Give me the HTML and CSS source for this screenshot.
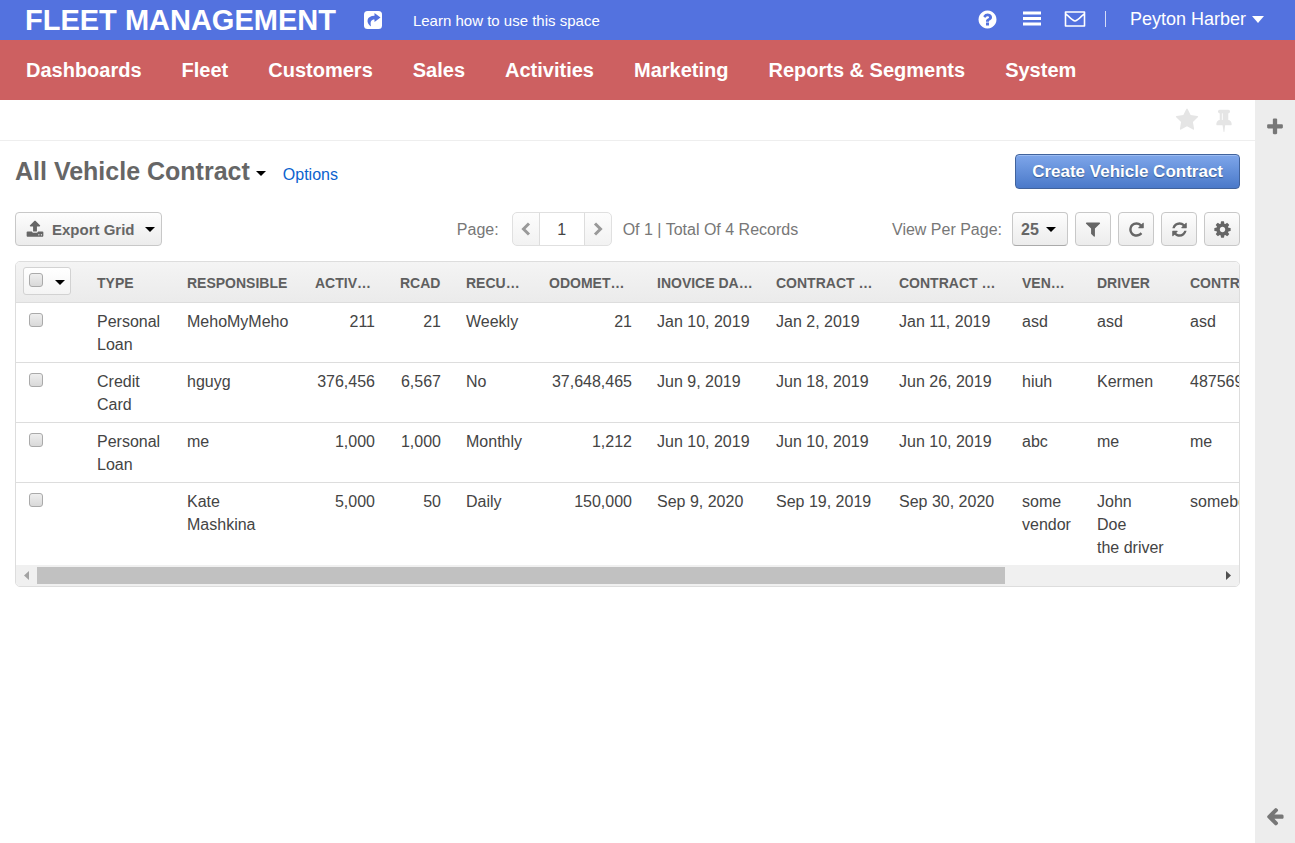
FILE: index.html
```html
<!DOCTYPE html>
<html lang="en">
<head>
<meta charset="utf-8">
<title>Fleet Management</title>
<link rel="stylesheet" href="styles.css">
</head>
<body>
<header class="topbar">
  <span class="brand">FLEET MANAGEMENT</span>
  <a class="share" href="#" aria-label="Share space"><svg width="20" height="20" viewBox="0 0 20 20"><rect x="1" y="1" width="18" height="18" rx="3.500" fill="#fff"/><path d="M11.500 3 17.500 7.500l-6 4.500V9.500C8 9.500 7 11.500 8 16.500 2.500 12.500 3.500 5.700 11.500 5.700z" fill="#5372df"/></svg></a>
  <a class="learn" href="#">Learn how to use this space</a>
  <div class="tools">
    <a class="tool help" href="#" aria-label="Help"><svg width="21" height="21" viewBox="0 0 1792 1792"><path d="M1024 1376v-192q0-14-9-23t-23-9h-192q-14 0-23 9t-9 23v192q0 14 9 23t23 9h192q14 0 23-9t9-23zm256-672q0-88-55.500-163t-138.500-116-170-41q-243 0-371 213-15 24 8 42l132 100q7 6 19 6 16 0 25-12 53-68 86-92 34-24 86-24 48 0 85.500 26t37.500 59q0 38-20 61t-68 45q-63 28-115.500 86.500t-52.500 125.500v36q0 14 9 23t23 9h192q14 0 23-9t9-23q0-19 21.500-49.500t54.500-49.500q32-18 49-28.500t46-35 44.500-48 28-60.500 12.500-81zm384 192q0 209-103 385.500t-279.500 279.500-385.500 103-385.500-103-279.500-279.500-103-385.500 103-385.500 279.500-279.500 385.500-103 385.500 103 279.500 279.500 103 385.500z"/></svg></a>
    <button class="tool menu" aria-label="Menu"><svg width="20" height="20" viewBox="0 0 20 20"><path d="M1 2.500h18v3H1zM1 8h18v3H1zM1 13.500h18v3H1z"/></svg></button>
    <a class="tool mail" href="#" aria-label="Mail"><svg width="22" height="20" viewBox="0 0 22 20"><path d="M1.500 3h19v14h-19zM1.500 4.500c3.500 3 7 7.500 9.500 7.500s6-4.500 9.500-7.500" fill="none" stroke="#fff" stroke-width="1.600" stroke-linejoin="round"/></svg></a>
    <span class="divider"></span>
    <button class="user">Peyton Harber <svg width="12" height="7" viewBox="0 0 12 7"><path d="M0 0h12L6 7z"/></svg></button>
  </div>
</header>
<nav class="nav">
  <a href="#">Dashboards</a><a href="#">Fleet</a><a href="#">Customers</a><a href="#">Sales</a><a href="#">Activities</a><a href="#">Marketing</a><a href="#">Reports &amp; Segments</a><a href="#">System</a>
</nav>
<div class="layout">
  <main class="main">
    <div class="marks">
      <button class="mark" aria-label="Favorite"><svg width="24" height="24" viewBox="0 0 1792 1792"><path d="M1728 647q0 22-26 48l-363 354 86 500q1 7 1 20 0 21-10.500 35.500t-30.500 14.500q-19 0-40-12l-449-236-449 236q-22 12-40 12-21 0-31.500-14.500t-10.500-35.500q0-6 2-20l86-500-364-354q-25-27-25-48 0-37 56-46l502-73 225-455q19-41 49-41t49 41l225 455 502 73q56 9 56 46z"/></svg></button>
      <button class="mark" aria-label="Pin"><svg width="24" height="24" viewBox="0 0 1792 1792"><path d="M800 864v-448q0-14-9-23t-23-9-23 9-9 23v448q0 14 9 23t23 9 23-9 9-23zm672 352q0 26-19 45t-45 19h-429l-51 483q-2 12-10.500 20.500t-20.500 8.500h-1q-27 0-32-27l-76-485h-404q-26 0-45-19t-19-45q0-123 78.500-221.500t177.500-98.500v-512q-52 0-90-38t-38-90 38-90 90-38h640q52 0 90 38t38 90-38 90-90 38v512q99 0 177.500 98.500t78.500 221.500z"/></svg></button>
    </div>
    <div class="content">
      <div class="heading">
        <h1>All Vehicle Contract</h1>
        <button class="views" aria-label="Choose view"><span class="caret"></span></button>
        <a class="options" href="#">Options</a>
        <button class="create">Create Vehicle Contract</button>
      </div>
      <div class="toolbar">
        <div><button class="btn export"><svg width="18" height="18" viewBox="0 0 1792 1792"><path d="M1344 1472q0-26-19-45t-45-19-45 19-19 45 19 45 45 19 45-19 19-45zm256 0q0-26-19-45t-45-19-45 19-19 45 19 45 45 19 45-19 19-45zm128-224v320q0 40-28 68t-68 28h-1472q-40 0-68-28t-28-68v-320q0-40 28-68t68-28h427q21 56 70.500 92t110.500 36h256q61 0 110.500-36t70.500-92h427q40 0 68 28t28 68zm-325-648q-17 40-59 40h-256v448q0 26-19 45t-45 19h-256q-26 0-45-19t-19-45v-448h-256q-42 0-59-40-17-39 14-69l448-448q18-19 45-19t45 19l448 448q31 30 14 69z"/></svg><span>Export Grid</span><span class="caret"></span></button></div>
        <div class="paging">
          <label for="page">Page:</label>
          <div class="pager">
            <button aria-label="Previous page"><svg width="12" height="14" viewBox="0 0 12 14"><path d="M9 1.500 3.500 7 9 12.500"/></svg></button>
            <input id="page" type="text" value="1">
            <button aria-label="Next page"><svg width="12" height="14" viewBox="0 0 12 14"><path d="M3 1.500 8.500 7 3 12.500"/></svg></button>
          </div>
          <span>Of 1 | Total Of 4 Records</span>
        </div>
        <div class="actions">
          <label for="size">View Per Page:</label>
          <div class="sizebox"><select id="size" class="btn size"><option>25</option><option>50</option></select><span class="caret"></span></div>
          <button class="btn icon" aria-label="Filter"><svg width="18" height="18" viewBox="0 0 1792 1792"><path d="M1595 295q17 41-14 70l-493 493v742q0 42-39 59-13 5-25 5-27 0-45-19l-256-256q-19-19-19-45v-486l-493-493q-31-29-14-70 17-39 59-39h1280q42 0 59 39z"/></svg></button>
          <button class="btn icon" aria-label="Reset"><svg width="17" height="17" viewBox="0 0 1792 1792"><path d="M1664 256v448q0 26-19 45t-45 19h-448q-42 0-59-40-17-39 14-69l138-138q-148-137-349-137-104 0-198.500 40.500t-163.500 109.500-109.500 163.500-40.500 198.500 40.500 198.500 109.500 163.500 163.500 109.500 198.500 40.500q119 0 225-52t179-147q7-10 23-12 15 0 25 9l137 138q9 8 9.500 20.500t-7.500 22.500q-109 132-264 204.500t-327 72.500q-156 0-298-61t-245-164-164-245-61-298 61-298 164-245 245-164 298-61q147 0 284.500 55.500t244.500 156.500l130-129q29-31 70-14 39 17 39 59z"/></svg></button>
          <button class="btn icon" aria-label="Refresh"><svg width="17" height="17" viewBox="0 0 1792 1792"><path d="M1639 1056q0 5-1 7-64 268-268 434.500t-478 166.500q-146 0-282.500-55t-243.500-157l-129 129q-19 19-45 19t-45-19-19-45v-448q0-26 19-45t45-19h448q26 0 45 19t19 45-19 45l-137 137q71 66 161 102t187 36q134 0 250-65t186-179q11-17 53-117 8-23 30-23h192q13 0 22.500 9.500t9.500 22.500zm25-800v448q0 26-19 45t-45 19h-448q-26 0-45-19t-19-45 19-45l138-138q-148-137-349-137-134 0-250 65t-186 179q-11 17-53 117-8 23-30 23h-199q-13 0-22.500-9.500t-9.500-22.500v-7q65-268 270-434.500t480-166.500q146 0 284 55.500t245 156.500l130-129q19-19 45-19t45 19 19 45z"/></svg></button>
          <button class="btn icon" aria-label="Settings"><svg width="19" height="19" viewBox="0 0 1792 1792"><path d="M1152 896q0-106-75-181t-181-75-181 75-75 181 75 181 181 75 181-75 75-181zm512-109v222q0 12-8 23t-20 13l-185 28q-19 54-39 91 35 50 107 138 10 12 10 25t-9 23q-27 37-99 108t-94 71q-12 0-26-9l-138-108q-44 23-91 38-16 136-29 186-7 28-36 28h-222q-14 0-24.500-8.500t-11.500-21.500l-28-184q-49-16-90-37l-141 107q-10 9-25 9-14 0-25-11-126-114-165-168-7-10-7-23 0-12 8-23 15-21 51-66.500t54-70.500q-27-50-41-99l-183-27q-13-2-21-12.500t-8-23.500v-222q0-12 8-23t19-13l186-28q14-46 39-92-40-57-107-138-10-12-10-24 0-10 9-23 26-36 98.500-107.500t94.500-71.500q13 0 26 10l138 107q44-23 91-38 16-136 29-186 7-28 36-28h222q14 0 24.500 8.500t11.500 21.500l28 184q49 16 90 37l142-107q9-9 24-9 13 0 25 10 129 119 165 170 7 8 7 22 0 12-8 23-15 21-51 66.500t-54 70.500q26 50 41 98l183 28q13 2 21 12.500t8 23.500z"/></svg></button>
        </div>
      </div>
      <div class="grid">
        <div class="scroller">
          <table>
            <colgroup><col class="w-check"><col class="w-type"><col class="w-resp"><col class="w-activ"><col class="w-rcad"><col class="w-recur"><col class="w-odo"><col class="w-inv"><col class="w-date"><col class="w-date"><col class="w-ven"><col class="w-driver"><col class="w-last"></colgroup>
            <thead>
              <tr><th class="check"><span class="checkmenu"><input type="checkbox" aria-label="Select all"><button aria-label="Selection menu"><span class="caret"></span></button></span></th><th>TYPE</th><th>RESPONSIBLE</th><th>ACTIV…</th><th>RCAD</th><th>RECU…</th><th>ODOMET…</th><th>INOVICE DA…</th><th>CONTRACT …</th><th>CONTRACT …</th><th>VEN…</th><th>DRIVER</th><th>CONTRACT</th></tr>
            </thead>
            <tbody>
              <tr><td class="check"><input type="checkbox" aria-label="Select row 1"></td><td>Personal Loan</td><td>MehoMyMeho</td><td class="num">211</td><td class="num">21</td><td>Weekly</td><td class="num">21</td><td>Jan 10, 2019</td><td>Jan 2, 2019</td><td>Jan 11, 2019</td><td>asd</td><td>asd</td><td>asd</td></tr>
              <tr><td class="check"><input type="checkbox" aria-label="Select row 2"></td><td>Credit Card</td><td>hguyg</td><td class="num">376,456</td><td class="num">6,567</td><td>No</td><td class="num">37,648,465</td><td>Jun 9, 2019</td><td>Jun 18, 2019</td><td>Jun 26, 2019</td><td>hiuh</td><td>Kermen</td><td>487569</td></tr>
              <tr><td class="check"><input type="checkbox" aria-label="Select row 3"></td><td>Personal Loan</td><td>me</td><td class="num">1,000</td><td class="num">1,000</td><td>Monthly</td><td class="num">1,212</td><td>Jun 10, 2019</td><td>Jun 10, 2019</td><td>Jun 10, 2019</td><td>abc</td><td>me</td><td>me</td></tr>
              <tr><td class="check"><input type="checkbox" aria-label="Select row 4"></td><td></td><td>Kate Mashkina</td><td class="num">5,000</td><td class="num">50</td><td>Daily</td><td class="num">150,000</td><td>Sep 9, 2020</td><td>Sep 19, 2019</td><td>Sep 30, 2020</td><td>some vendor</td><td>John Doe<br>the driver</td><td>somebody</td></tr>
            </tbody>
          </table>
        </div>
        <div class="scrollbar">
          <svg width="21" height="19" viewBox="0 0 21 19"><path d="M13 5v9l-5-4.500z" fill="#a3a3a3"/></svg>
          <div class="track"><div class="thumb"></div></div>
          <svg width="21" height="19" viewBox="0 0 21 19"><path d="M8 5v9l5-4.500z" fill="#505050"/></svg>
        </div>
      </div>
    </div>
  </main>
  <aside class="rail">
    <button aria-label="Add"><svg width="20" height="20" viewBox="0 0 1792 1792"><path d="M1600 736v192q0 40-28 68t-68 28h-416v416q0 40-28 68t-68 28h-192q-40 0-68-28t-28-68v-416h-416q-40 0-68-28t-28-68v-192q0-40 28-68t68-28h416v-416q0-40 28-68t68-28h192q40 0 68 28t28 68v416h416q40 0 68 28t28 68z"/></svg></button>
    <button aria-label="Expand"><svg width="20" height="20" viewBox="0 0 1792 1792"><path d="M1664 896v128q0 53-32.500 90.500t-84.500 37.500h-704l293 294q38 36 38 90t-38 90l-75 76q-37 37-90 37-52 0-91-37l-651-652q-37-37-37-90 0-52 37-91l651-650q38-38 91-38 52 0 90 38l75 74q38 38 38 91t-38 91l-293 293h704q52 0 84.500 37.500t32.500 90.500z"/></svg></button>
  </aside>
</div>
</body>
</html>
```
FILE: styles.css
```css
* { box-sizing: border-box; }
body {
  margin: 0;
  min-height: 100vh;
  display: flex;
  flex-direction: column;
  font: 16px/23px "Liberation Sans", Arial, sans-serif;
  color: #444;
  background: #fff;
}
a { text-decoration: none; color: inherit; }
button, input, select { font: inherit; color: inherit; margin: 0; }
button { border: 0; padding: 0; background: none; cursor: pointer; }
svg { display: block; fill: currentColor; }
.caret {
  display: inline-block;
  border: 5px solid transparent;
  border-top-color: #000;
  border-bottom: 0;
}

.topbar {
  display: flex;
  align-items: center;
  height: 40px;
  padding: 0 31px 0 25px;
  background: #5372df;
  color: #fff;
}
.brand { font-size: 29px; font-weight: bold; white-space: nowrap; }
.share { margin-left: 27px; }
.learn { margin-left: 30px; font-size: 15px; }
.tools { display: flex; align-items: center; margin-left: auto; padding-bottom: 2px; }
.help { margin-right: 24px; }
.menu { margin-right: 22px; }
.mail { margin-right: 19px; }
.divider { width: 1px; height: 16px; margin-right: 24px; background: #d5dcf7; }
.user { display: flex; align-items: center; gap: 6px; font-size: 18px; }

.nav {
  display: flex;
  align-items: center;
  gap: 40px;
  height: 60px;
  padding: 0 26px;
  background: #cd6061;
  color: #fff;
  font-size: 20px;
  font-weight: bold;
  white-space: nowrap;
}

.layout { flex: 1; display: flex; }
.main { flex: 1; min-width: 0; }
.rail {
  width: 40px;
  padding: 17px 0;
  display: flex;
  flex-direction: column;
  justify-content: space-between;
  align-items: center;
  background: #ededed;
  color: #777;
}
.marks {
  display: flex;
  justify-content: flex-end;
  align-items: center;
  gap: 13px;
  height: 41px;
  padding: 0 19px;
  border-bottom: 1px solid #eee;
  color: #e5e5e5;
}
.content { padding: 13px 15px; }

.heading { display: flex; align-items: center; height: 35px; margin-bottom: 23px; }
h1 { margin: 0; font-size: 25px; font-weight: bold; color: #666; }
.views { display: flex; padding: 4px 6px 0; }
.options { margin-left: 11px; padding-top: 6px; color: #0b63ce; }
.create {
  margin-left: auto;
  align-self: stretch;
  padding: 0 16px;
  border: 1px solid #41639c;
  border-radius: 4px;
  background: linear-gradient(#7ea6ea, #4a79c9);
  box-shadow: inset 0 1px 0 #9cbcf2;
  color: #fff;
  font-size: 17px;
  font-weight: bold;
  text-shadow: 0 1px 1px #34588f;
}

.toolbar {
  display: grid;
  grid-template-columns: 1fr auto 1fr;
  align-items: center;
  margin-bottom: 15px;
  color: #777;
}
.btn {
  height: 34px;
  border: 1px solid #c8c8c8;
  border-radius: 4px;
  background: linear-gradient(#fdfdfd, #ececec);
  color: #666;
  font-weight: bold;
}
.export { display: flex; align-items: center; padding: 0 6px 0 10px; font-size: 15px; }
.export span + .caret { margin-left: 10px; }
.export svg { margin-right: 8px; }
.paging { display: flex; align-items: center; }
.pager {
  display: flex;
  width: 100px;
  height: 34px;
  margin: 0 11px 0 13px;
  border: 1px solid #e0e0e0;
  border-radius: 5px;
  background: linear-gradient(#fdfdfd, #f2f2f2);
  overflow: hidden;
}
.pager button { flex: 1; display: flex; align-items: center; justify-content: center; }
.pager path { fill: none; stroke: #999; stroke-width: 3; }
.pager input {
  width: 46px;
  border: solid #ddd;
  border-width: 0 1px;
  padding: 0;
  background: #fff;
  color: #444;
  text-align: center;
}
.actions { display: flex; align-items: center; justify-content: flex-end; gap: 7px; white-space: nowrap; }
.actions label { margin-right: 3px; }
.sizebox { position: relative; }
.size { appearance: none; width: 56px; padding: 0 8px; border-bottom-color: #aaa; }
.sizebox .caret { position: absolute; right: 12px; top: 15px; pointer-events: none; }
.icon { width: 36px; display: flex; align-items: center; justify-content: center; }

.grid { border: 1px solid #ddd; border-radius: 5px; overflow: hidden; }
.scroller { overflow-x: auto; scrollbar-width: none; }
table { table-layout: fixed; width: 1480px; border-collapse: separate; border-spacing: 0; }
.w-check { width: 68px; }
.w-type { width: 90px; }
.w-resp { width: 128px; }
.w-activ { width: 85px; }
.w-rcad { width: 66px; }
.w-recur { width: 83px; }
.w-odo { width: 108px; }
.w-inv { width: 119px; }
.w-date { width: 123px; }
.w-ven { width: 75px; }
.w-driver { width: 93px; }
th {
  height: 41px;
  padding: 2px 0 0 13px;
  border-bottom: 1px solid #ddd;
  background: linear-gradient(#f4f4f4, #ebebeb);
  color: #5f5f5f;
  font-size: 14px;
  text-align: left;
  white-space: nowrap;
}
td { padding: 7px 12px 6px 13px; border-bottom: 1px solid #ddd; vertical-align: top; }
tbody tr:last-child td { border-bottom: 0; }
.num { text-align: right; }
th.check { padding: 0 7px 2px; }
input[type="checkbox"] {
  appearance: none;
  display: block;
  width: 14px;
  height: 14px;
  border: 1px solid #aaa;
  border-radius: 3px;
  background: linear-gradient(#eee, #d9d9d9);
}
td.check { padding-top: 10px; }
.checkmenu {
  display: flex;
  align-items: center;
  justify-content: space-between;
  width: 48px;
  height: 28px;
  padding: 0 5px 2px;
  border: 1px solid #d2d2d2;
  border-radius: 3px;
  background: linear-gradient(#fff, #f4f4f4);
}
.checkmenu button { display: flex; padding-top: 4px; }
.scrollbar { display: flex; align-items: center; height: 21px; padding-top: 0; background: #f0f0f0; }
.track { flex: 1; }
.thumb { width: 82%; height: 17px; background: #c1c1c1; }
```
